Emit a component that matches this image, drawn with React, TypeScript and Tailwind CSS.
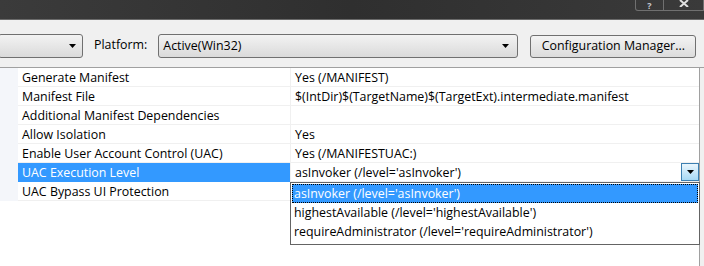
const rows = [
  { name: "Generate Manifest", value: "Yes (/MANIFEST)" },
  { name: "Manifest File", value: "$(IntDir)$(TargetName)$(TargetExt).intermediate.manifest" },
  { name: "Additional Manifest Dependencies", value: "" },
  { name: "Allow Isolation", value: "Yes" },
  { name: "Enable User Account Control (UAC)", value: "Yes (/MANIFESTUAC:)" },
  { name: "UAC Execution Level", value: "asInvoker (/level='asInvoker')", selected: true },
  { name: "UAC Bypass UI Protection", value: "" },
];

const options = [
  "asInvoker (/level='asInvoker')",
  "highestAvailable (/level='highestAvailable')",
  "requireAdministrator (/level='requireAdministrator')",
];

function Arrow() {
  return (
    <svg width="7" height="4" viewBox="0 0 7 4">
      <path d="M0 0h7L3.5 4z" fill="#000" />
    </svg>
  );
}

export default function App() {
  return (
    <div
      className="relative w-[704px] h-[266px] overflow-hidden bg-[#f0f0f0] text-[12.4px] text-black"
      style={{ fontFamily: '"Open Sans", "Noto Sans", sans-serif' }}
    >
      {/* title bar */}
      <div className="h-[20px] flex justify-end bg-gradient-to-r from-[#3b3b3b] via-[#2f2f2f] to-[#3a3a3a] border-b border-[#6a6a6a]">
        <div className="flex h-[11px]">
          <div className="w-[29px] h-full border border-t-0 border-[#707070] rounded-bl-[3px] flex items-center justify-center">
            <span className="text-[9px] leading-[9px] font-bold text-[#c8c8d0]">?</span>
          </div>
          <div className="w-[40px] h-full border border-t-0 border-l-0 border-[#707070] flex items-start justify-center">
            <svg width="10" height="7" viewBox="0 0 10 7">
              <path d="M1 0l8 7M9 0L1 7" stroke="#e0e0e0" strokeWidth="2" />
            </svg>
          </div>
        </div>
      </div>

      {/* toolbar */}
      <div className="h-[48px] flex items-start pt-[14px] border-b border-[#a0a0a0]">
        <div className="w-[85px] h-[24px] -ml-[2px] rounded-[3px] border border-[#707070] bg-gradient-to-b from-[#f3f3f3] to-[#dadada] flex items-center justify-end pr-[6px]">
          <Arrow />
        </div>
        <span className="ml-[11px] mt-[3px] leading-[16px]">Platform:</span>
        <div className="ml-[11px] w-[360px] h-[24px] rounded-[3px] border border-[#707070] bg-gradient-to-b from-[#f3f3f3] to-[#dadada] flex items-center justify-between pl-[4px] pr-[8px]">
          <span>Active(Win32)</span>
          <Arrow />
        </div>
        <div className="ml-[12px] mt-[1px] w-[166px] h-[23px] rounded-[3px] border border-[#707070] bg-gradient-to-b from-[#f3f3f3] to-[#dcdcdc] flex items-center justify-center">
          Configuration Manager...
        </div>
      </div>

      {/* property grid */}
      <div className="w-[700px] h-[199px] bg-white border-r border-[#a0a0a0]">
        {rows.map((r) => (
          <div key={r.name} className="flex h-[19px]">
            <div className="w-[18px] bg-[#f4f6fa]" />
            <div
              className={
                r.selected
                  ? "w-[272px] bg-[#3399ff] text-white pl-[4px] leading-[20px]"
                  : "w-[272px] border-b border-[#f0f0f0] pl-[4px] leading-[19px]"
              }
            >
              {r.name}
            </div>
            <div className="flex-1 flex items-center border-l border-b border-[#f0f0f0] pl-[4px] leading-[19px]">
              <span className="flex-1 pt-[1px]">{r.value}</span>
              {r.selected && (
                <div className="w-[18px] h-[18px] border border-[#3c7fb1] bg-gradient-to-b from-[#eaf6fd] to-[#a7d9f5] flex items-center justify-center">
                  <Arrow />
                </div>
              )}
            </div>
          </div>
        ))}
      </div>

      {/* open dropdown list */}
      <div className="absolute left-[290px] top-[182px] w-[410px] h-[63px] bg-white border border-[#646464] pt-[1px] px-[1px]">
        {options.map((o, i) => (
          <div
            key={o}
            className={
              i === 0
                ? "h-[19px] leading-[18px] pl-[1px] bg-[#3399ff] text-white border border-dotted border-black"
                : "h-[19px] leading-[20px] pl-[2px]"
            }
          >
            {o}
          </div>
        ))}
      </div>
    </div>
  );
}
